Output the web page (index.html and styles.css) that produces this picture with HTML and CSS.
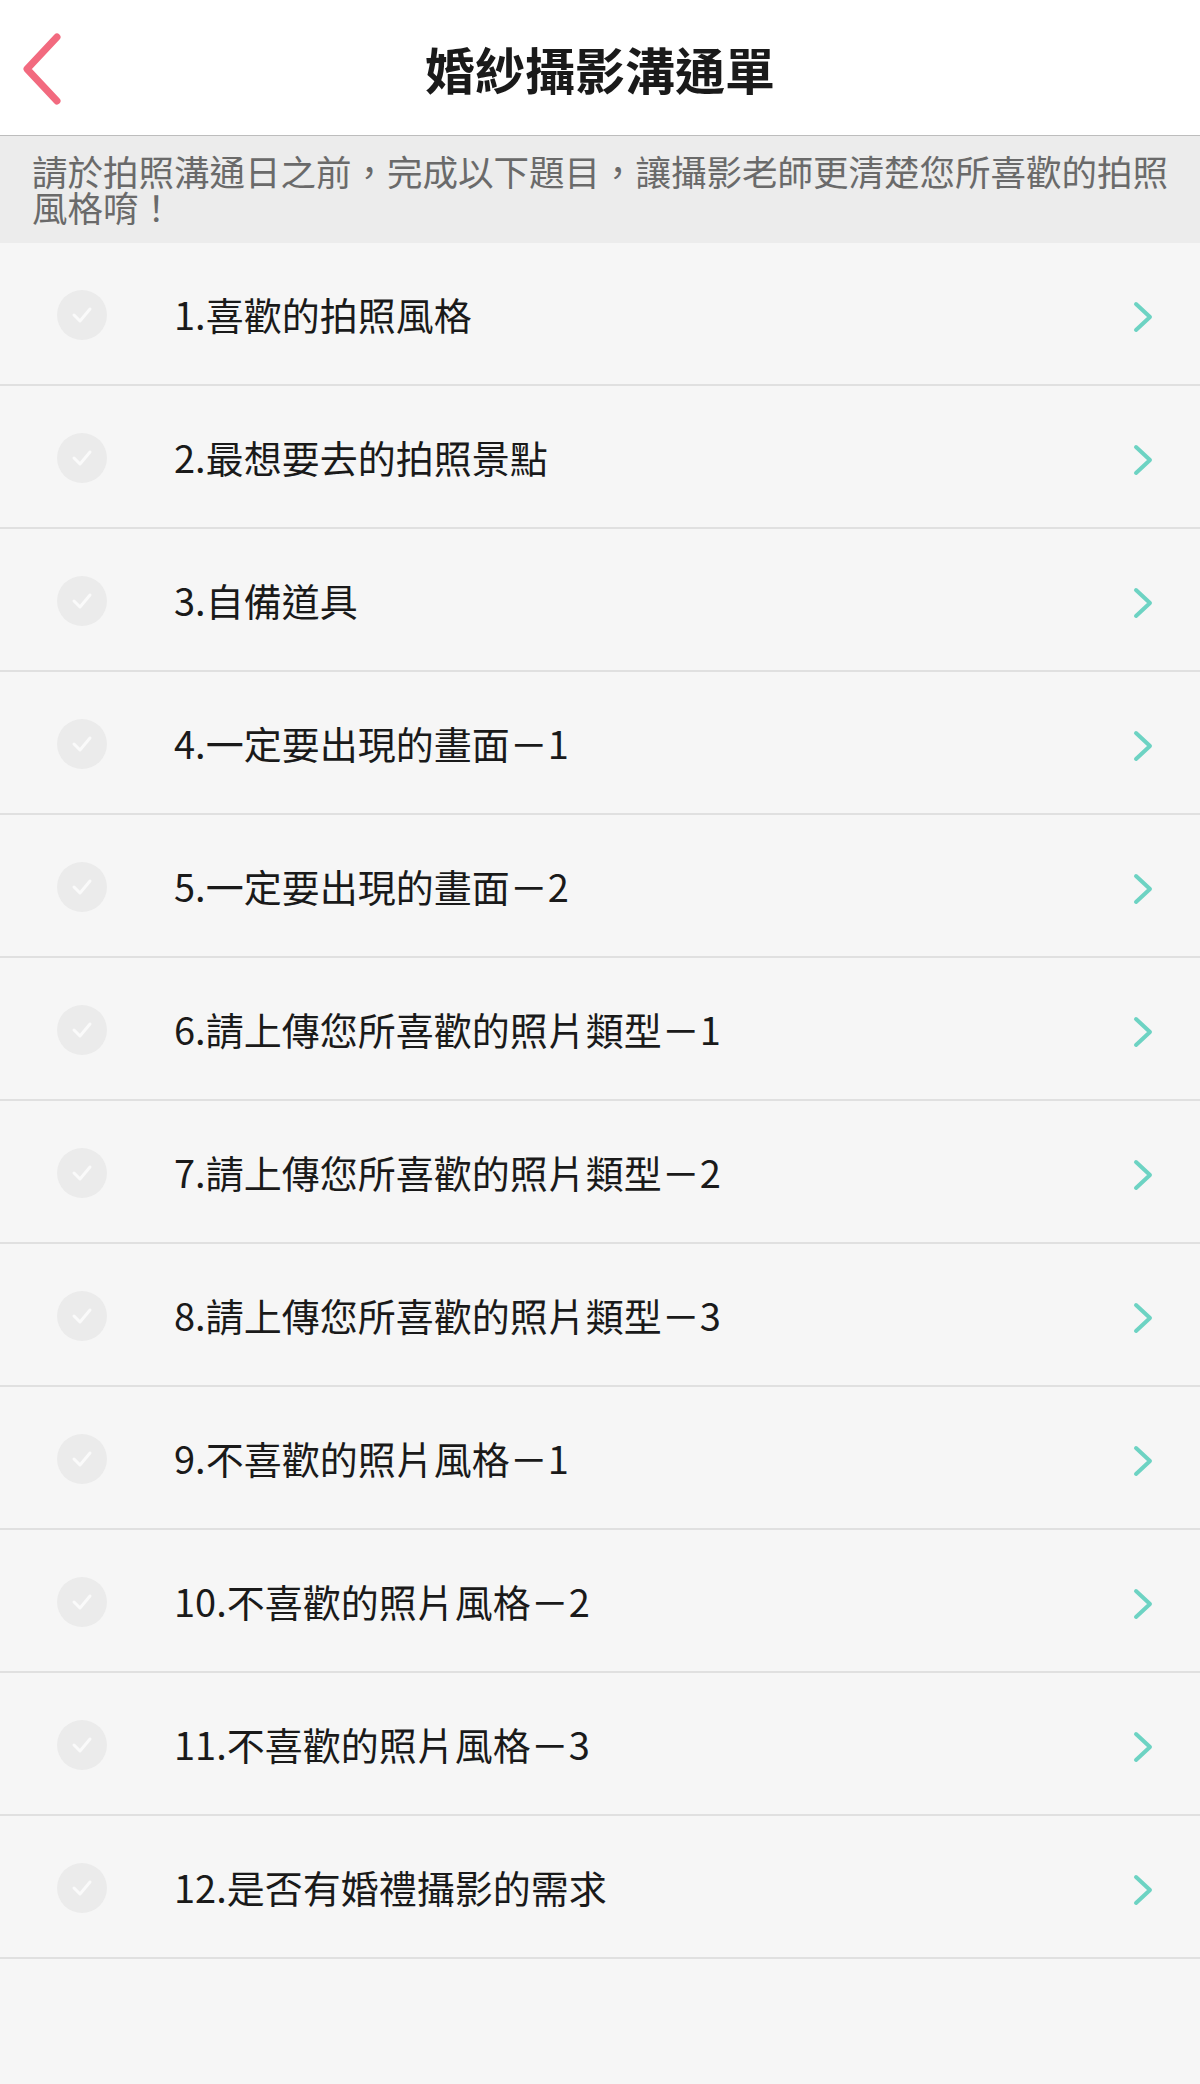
FILE: index.html
```html
<!DOCTYPE html>
<html lang="zh-Hant">
<head>
<meta charset="utf-8">
<title>婚紗攝影溝通單</title>
<link rel="stylesheet" href="styles.css">
</head>
<body>
<div class="page">
  <header class="topbar">
    <a class="back" href="#" aria-label="返回">
      <svg width="46" height="76" viewBox="0 0 46 76"><polyline points="37,6 7,38 37,70" fill="none" stroke="#f26a7f" stroke-width="7" stroke-linecap="round" stroke-linejoin="round"/></svg>
    </a>
    <h1 class="title">婚紗攝影溝通單</h1>
  </header>
  <div class="notice">請於拍照溝通日之前，完成以下題目，讓攝影老師更清楚您所喜歡的拍照風格唷！</div>
  <ul class="list">
    <li class="item"><span class="check"><svg width="22" height="18" viewBox="0 0 22 18"><polyline points="3,9 9,15 19,3" fill="none" stroke="#fafafa" stroke-width="3" stroke-linecap="round" stroke-linejoin="round"/></svg></span><span class="label">1.喜歡的拍照風格</span><span class="arrow"><svg width="22" height="34" viewBox="0 0 22 34"><polyline points="4,4 18,17 4,30" fill="none" stroke="#6dd3c3" stroke-width="4" stroke-linecap="round" stroke-linejoin="round"/></svg></span></li>
    <li class="item"><span class="check"><svg width="22" height="18" viewBox="0 0 22 18"><polyline points="3,9 9,15 19,3" fill="none" stroke="#fafafa" stroke-width="3" stroke-linecap="round" stroke-linejoin="round"/></svg></span><span class="label">2.最想要去的拍照景點</span><span class="arrow"><svg width="22" height="34" viewBox="0 0 22 34"><polyline points="4,4 18,17 4,30" fill="none" stroke="#6dd3c3" stroke-width="4" stroke-linecap="round" stroke-linejoin="round"/></svg></span></li>
    <li class="item"><span class="check"><svg width="22" height="18" viewBox="0 0 22 18"><polyline points="3,9 9,15 19,3" fill="none" stroke="#fafafa" stroke-width="3" stroke-linecap="round" stroke-linejoin="round"/></svg></span><span class="label">3.自備道具</span><span class="arrow"><svg width="22" height="34" viewBox="0 0 22 34"><polyline points="4,4 18,17 4,30" fill="none" stroke="#6dd3c3" stroke-width="4" stroke-linecap="round" stroke-linejoin="round"/></svg></span></li>
    <li class="item"><span class="check"><svg width="22" height="18" viewBox="0 0 22 18"><polyline points="3,9 9,15 19,3" fill="none" stroke="#fafafa" stroke-width="3" stroke-linecap="round" stroke-linejoin="round"/></svg></span><span class="label">4.一定要出現的畫面－1</span><span class="arrow"><svg width="22" height="34" viewBox="0 0 22 34"><polyline points="4,4 18,17 4,30" fill="none" stroke="#6dd3c3" stroke-width="4" stroke-linecap="round" stroke-linejoin="round"/></svg></span></li>
    <li class="item"><span class="check"><svg width="22" height="18" viewBox="0 0 22 18"><polyline points="3,9 9,15 19,3" fill="none" stroke="#fafafa" stroke-width="3" stroke-linecap="round" stroke-linejoin="round"/></svg></span><span class="label">5.一定要出現的畫面－2</span><span class="arrow"><svg width="22" height="34" viewBox="0 0 22 34"><polyline points="4,4 18,17 4,30" fill="none" stroke="#6dd3c3" stroke-width="4" stroke-linecap="round" stroke-linejoin="round"/></svg></span></li>
    <li class="item"><span class="check"><svg width="22" height="18" viewBox="0 0 22 18"><polyline points="3,9 9,15 19,3" fill="none" stroke="#fafafa" stroke-width="3" stroke-linecap="round" stroke-linejoin="round"/></svg></span><span class="label">6.請上傳您所喜歡的照片類型－1</span><span class="arrow"><svg width="22" height="34" viewBox="0 0 22 34"><polyline points="4,4 18,17 4,30" fill="none" stroke="#6dd3c3" stroke-width="4" stroke-linecap="round" stroke-linejoin="round"/></svg></span></li>
    <li class="item"><span class="check"><svg width="22" height="18" viewBox="0 0 22 18"><polyline points="3,9 9,15 19,3" fill="none" stroke="#fafafa" stroke-width="3" stroke-linecap="round" stroke-linejoin="round"/></svg></span><span class="label">7.請上傳您所喜歡的照片類型－2</span><span class="arrow"><svg width="22" height="34" viewBox="0 0 22 34"><polyline points="4,4 18,17 4,30" fill="none" stroke="#6dd3c3" stroke-width="4" stroke-linecap="round" stroke-linejoin="round"/></svg></span></li>
    <li class="item"><span class="check"><svg width="22" height="18" viewBox="0 0 22 18"><polyline points="3,9 9,15 19,3" fill="none" stroke="#fafafa" stroke-width="3" stroke-linecap="round" stroke-linejoin="round"/></svg></span><span class="label">8.請上傳您所喜歡的照片類型－3</span><span class="arrow"><svg width="22" height="34" viewBox="0 0 22 34"><polyline points="4,4 18,17 4,30" fill="none" stroke="#6dd3c3" stroke-width="4" stroke-linecap="round" stroke-linejoin="round"/></svg></span></li>
    <li class="item"><span class="check"><svg width="22" height="18" viewBox="0 0 22 18"><polyline points="3,9 9,15 19,3" fill="none" stroke="#fafafa" stroke-width="3" stroke-linecap="round" stroke-linejoin="round"/></svg></span><span class="label">9.不喜歡的照片風格－1</span><span class="arrow"><svg width="22" height="34" viewBox="0 0 22 34"><polyline points="4,4 18,17 4,30" fill="none" stroke="#6dd3c3" stroke-width="4" stroke-linecap="round" stroke-linejoin="round"/></svg></span></li>
    <li class="item"><span class="check"><svg width="22" height="18" viewBox="0 0 22 18"><polyline points="3,9 9,15 19,3" fill="none" stroke="#fafafa" stroke-width="3" stroke-linecap="round" stroke-linejoin="round"/></svg></span><span class="label">10.不喜歡的照片風格－2</span><span class="arrow"><svg width="22" height="34" viewBox="0 0 22 34"><polyline points="4,4 18,17 4,30" fill="none" stroke="#6dd3c3" stroke-width="4" stroke-linecap="round" stroke-linejoin="round"/></svg></span></li>
    <li class="item"><span class="check"><svg width="22" height="18" viewBox="0 0 22 18"><polyline points="3,9 9,15 19,3" fill="none" stroke="#fafafa" stroke-width="3" stroke-linecap="round" stroke-linejoin="round"/></svg></span><span class="label">11.不喜歡的照片風格－3</span><span class="arrow"><svg width="22" height="34" viewBox="0 0 22 34"><polyline points="4,4 18,17 4,30" fill="none" stroke="#6dd3c3" stroke-width="4" stroke-linecap="round" stroke-linejoin="round"/></svg></span></li>
    <li class="item"><span class="check"><svg width="22" height="18" viewBox="0 0 22 18"><polyline points="3,9 9,15 19,3" fill="none" stroke="#fafafa" stroke-width="3" stroke-linecap="round" stroke-linejoin="round"/></svg></span><span class="label">12.是否有婚禮攝影的需求</span><span class="arrow"><svg width="22" height="34" viewBox="0 0 22 34"><polyline points="4,4 18,17 4,30" fill="none" stroke="#6dd3c3" stroke-width="4" stroke-linecap="round" stroke-linejoin="round"/></svg></span></li>
  </ul>
</div>
</body>
</html>
```

FILE: styles.css
```css
* { box-sizing: border-box; }
html, body {
  margin: 0;
  padding: 0;
  background: #f6f6f6;
}
body {
  font-family: "Noto Sans CJK TC", "Noto Sans", sans-serif;
  color: #1c1c1c;
}
.page {
  width: 1200px;
  min-height: 2084px;
  background: #f6f6f6;
}
.topbar {
  position: relative;
  height: 136px;
  background: #ffffff;
  border-bottom: 1px solid #bdbdbd;
  display: flex;
  align-items: center;
  justify-content: center;
}
.back {
  position: absolute;
  left: 20px;
  top: 31px;
  display: block;
  width: 46px;
  height: 76px;
}
.back svg { display: block; }
.title {
  margin: 0;
  font-size: 50px;
  font-weight: 700;
  line-height: 1;
  color: #1a1a1a;
}
.notice {
  background: #ececec;
  color: #6a6a6a;
  font-size: 35.5px;
  line-height: 36px;
  padding: 17px 24px 17px 32px;
  height: 107px;
}
.list {
  list-style: none;
  margin: 0;
  padding: 0;
}
.item {
  display: flex;
  align-items: center;
  height: 143px;
  border-bottom: 2px solid #e0e0e0;
  padding-left: 57px;
  padding-right: 46px;
}
.check {
  width: 50px;
  height: 50px;
  border-radius: 50%;
  background: #ebebeb;
  display: flex;
  align-items: center;
  justify-content: center;
  flex-shrink: 0;
  margin-top: 2px;
}
.check svg { display: block; }
.label {
  flex: 1;
  margin-left: 67px;
  font-size: 38px;
  line-height: 1;
  color: #1a1a1a;
}
.arrow {
  width: 22px;
  height: 34px;
  display: block;
  margin-top: 6px;
}
.arrow svg { display: block; }
```
